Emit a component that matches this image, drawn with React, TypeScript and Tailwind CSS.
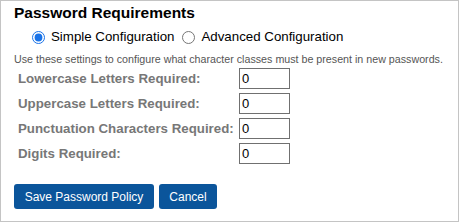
import { useState } from 'react';

const FIELDS = [
  'Lowercase Letters Required:',
  'Uppercase Letters Required:',
  'Punctuation Characters Required:',
  'Digits Required:',
];

export default function App() {
  const [mode, setMode] = useState<'simple' | 'advanced'>('simple');

  return (
    <div
      className="w-[459px] h-[222px] border border-[#c4c4c4] bg-white text-black overflow-hidden"
      style={{ fontFamily: '"Liberation Sans", Arial, sans-serif' }}
    >
      <div className="pl-[13px] pt-[3px]">
        <h2 className="text-[15.5px] font-bold leading-[18px]">Password Requirements</h2>

        <div className="flex items-center pl-[18px] mt-[6px] h-[18px] text-[13.3px]">
          <label className="flex items-center gap-[6px]">
            <input
              type="radio"
              name="mode"
              checked={mode === 'simple'}
              onChange={() => setMode('simple')}
              className="w-[13px] h-[13px] m-0 accent-[#1a73e8]"
            />
            Simple Configuration
          </label>
          <label className="flex items-center gap-[6px] ml-[8px]">
            <input
              type="radio"
              name="mode"
              checked={mode === 'advanced'}
              onChange={() => setMode('advanced')}
              className="w-[13px] h-[13px] m-0"
            />
            Advanced Configuration
          </label>
        </div>

        <p className="text-[10.7px] text-[#555] mt-[7px] leading-[13px] whitespace-nowrap">
          Use these settings to configure what character classes must be present in new passwords.
        </p>

        <div className="mt-[2px] pl-[4px] flex flex-col gap-[4px]">
          {FIELDS.map((f) => (
            <div key={f} className="flex items-center h-[21px]">
              <span className="w-[221px] text-[13.3px] font-bold text-[#777] whitespace-nowrap">{f}</span>
              <input
                defaultValue="0"
                className="w-[51px] h-[21px] border border-[#707070] px-[2px] text-[13px] outline-none"
              />
            </div>
          ))}
        </div>

        <div className="flex gap-[5px] mt-[20px]">
          <button className="h-[25px] w-[140px] rounded-[3px] bg-[#0b559b] text-white text-[12px]">
            Save Password Policy
          </button>
          <button className="h-[25px] w-[58px] rounded-[3px] bg-[#0b559b] text-white text-[12px]">
            Cancel
          </button>
        </div>
      </div>
    </div>
  );
}
